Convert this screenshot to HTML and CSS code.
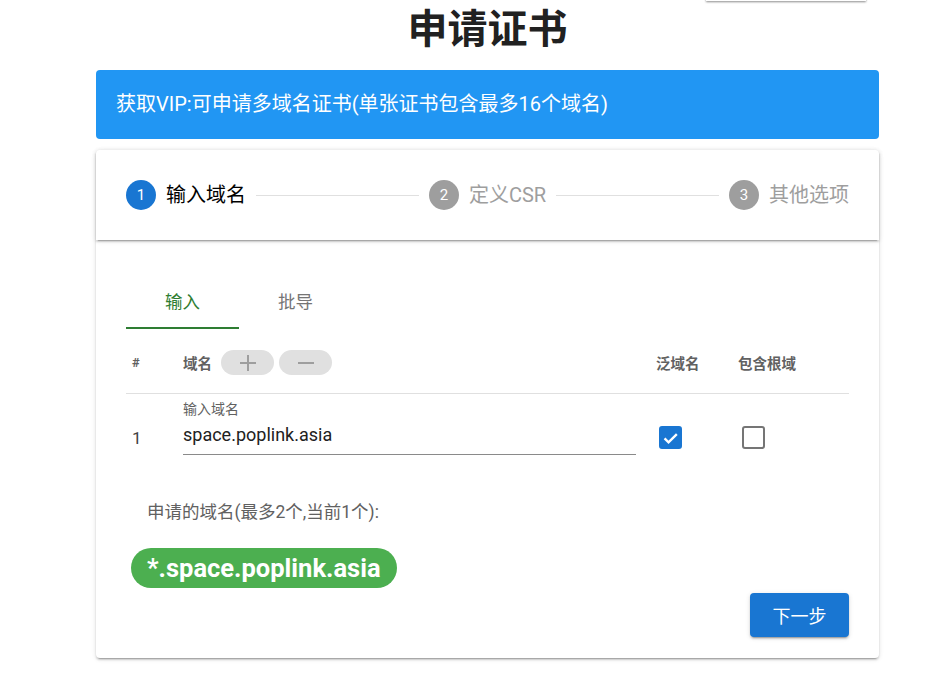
FILE: index.html
```html
<!DOCTYPE html>
<html lang="zh-CN">
<head>
<meta charset="utf-8">
<title>申请证书</title>
<link rel="stylesheet" href="styles.css">
</head>
<body>
<div class="menu-shadow"></div>
<main class="page">
  <h1 class="title">申请证书</h1>
  <div class="banner">获取VIP:可申请多域名证书(单张证书包含最多16个域名)</div>
  <section class="card">
    <div class="stepper">
      <div class="step active"><span class="step-num">1</span><span class="step-label">输入域名</span></div>
      <div class="step-line"></div>
      <div class="step"><span class="step-num">2</span><span class="step-label">定义CSR</span></div>
      <div class="step-line"></div>
      <div class="step"><span class="step-num">3</span><span class="step-label">其他选项</span></div>
    </div>
    <div class="content">
      <div class="tabs">
        <div class="tab tab-active">输入</div>
        <div class="tab">批导</div>
      </div>
      <div class="grid header">
        <div class="cell c-num">#</div>
        <div class="cell c-domain">域名
          <span class="pill"><svg width="18" height="18" viewBox="0 0 18 18"><path d="M9 1v16M1 9h16" stroke="#9e9e9e" stroke-width="2"/></svg></span>
          <span class="pill"><svg width="18" height="18" viewBox="0 0 18 18"><path d="M1 9h16" stroke="#9e9e9e" stroke-width="2"/></svg></span>
        </div>
        <div class="cell c-chk">泛域名</div>
        <div class="cell c-chk">包含根域</div>
      </div>
      <div class="grid row">
        <div class="num">1</div>
        <div class="field">
          <div class="field-label">输入域名</div>
          <div class="field-value">space.poplink.asia</div>
        </div>
        <div class="chk-cell wild"><span class="box checked"><svg width="22" height="22" viewBox="0 0 24 24"><path d="M4.5 12.5l5 5L20 7" fill="none" stroke="#fff" stroke-width="3"/></svg></span></div>
        <div class="chk-cell root"><span class="box"></span></div>
      </div>
      <p class="summary">申请的域名(最多2个,当前1个):</p>
      <div class="chips"><span class="chip">*.space.poplink.asia</span></div>
      <div class="actions"><button class="btn">下一步</button></div>
    </div>
  </section>
</main>
</body>
</html>
```

FILE: styles.css
```css
* { box-sizing: border-box; }
html, body { margin: 0; padding: 0; background: #fff; }
body {
  font-family: Roboto, "Noto Sans CJK SC", sans-serif;
  color: rgba(0,0,0,.87);
  position: relative;
  overflow: hidden;
  height: 692px;
}
.menu-shadow {
  position: absolute;
  left: 706px;
  top: -20px;
  width: 160px;
  height: 21px;
  background: #fff;
  box-shadow: 0 1px 2px rgba(0,0,0,.45);
}
.page {
  width: 783px;
  margin-left: 96px;
}
.title {
  margin: 0;
  height: 60px;
  line-height: 60px;
  font-size: 40px;
  font-weight: 700;
  text-align: center;
  color: #212121;
}
.banner {
  margin-top: 10px;
  height: 69px;
  line-height: 69px;
  padding: 0 20px;
  background: #2196f3;
  color: #fff;
  font-size: 20px;
  border-radius: 4px;
}
.card {
  margin-top: 11px;
  height: 508px;
  background: #fff;
  border-radius: 4px;
  box-shadow: 0 3px 1px -2px rgba(0,0,0,.2), 0 2px 2px 0 rgba(0,0,0,.14), 0 1px 5px 0 rgba(0,0,0,.12);
}
.stepper {
  height: 90px;
  display: flex;
  align-items: center;
  padding: 0 30px;
  box-shadow: 0 3px 1px -2px rgba(0,0,0,.2), 0 2px 2px 0 rgba(0,0,0,.14), 0 1px 5px 0 rgba(0,0,0,.12);
  position: relative;
  border-radius: 4px 4px 0 0;
}
.step {
  display: flex;
  align-items: center;
  gap: 10px;
  color: #9e9e9e;
}
.step-num {
  width: 30px;
  height: 30px;
  border-radius: 50%;
  background: #9e9e9e;
  color: #fff;
  font-size: 15px;
  display: flex;
  align-items: center;
  justify-content: center;
}
.step.active .step-num { background: #1976d2; }
.step.active { color: #000; }
.step-label { font-size: 20px; line-height: 24px; }
.step-line {
  flex: 1;
  height: 1px;
  background: #e0e0e0;
  margin: 0 10px;
}
.content {
  padding: 37px 30px 0 30px;
}
.tabs {
  display: flex;
  height: 52px;
}
.tab {
  width: 113px;
  text-align: center;
  font-size: 17.5px;
  line-height: 50px;
  color: #757575;
}
.tab-active {
  color: #2e7d32;
  border-bottom: 2px solid #2e7d32;
}
.grid {
  display: grid;
  grid-template-columns: 57px 463px 82px 1fr;
}
.header {
  height: 65px;
  padding-top: 3px;
  align-items: center;
  border-bottom: 1px solid #e0e0e0;
  font-size: 14.5px;
  font-weight: 700;
  color: #616161;
}
.cell { display: flex; align-items: center; }
.c-num { padding-left: 6px; font-size: 13px; }
.c-domain { gap: 5px; }
.c-domain .pill:first-of-type { margin-left: 4px; }
.c-chk { padding-left: 10px; }
.pill {
  width: 53px;
  height: 25px;
  border-radius: 13px;
  background: #e0e0e0;
  display: inline-flex;
  align-items: center;
  justify-content: center;
}
.row { height: 62px; }
.num {
  padding-left: 6px;
  padding-top: 32px;
  font-size: 17px;
  line-height: 24px;
  color: #424242;
}
.field {
  width: 453px;
  margin-top: 7px;
  height: 54px;
  border-bottom: 1px solid #8a8a8a;
}
.field-label {
  font-size: 14px;
  line-height: 16px;
  color: #616161;
}
.field-value {
  margin-top: 6px;
  font-size: 18px;
  line-height: 24px;
  color: #212121;
}
.chk-cell { padding-top: 32px; }
.wild { padding-left: 13px; }
.root { padding-left: 14px; }
.box {
  width: 23px;
  height: 23px;
  border-radius: 3px;
  border: 2px solid #757575;
  display: flex;
  align-items: center;
  justify-content: center;
}
.box.checked {
  background: #1976d2;
  border-color: #1976d2;
}
.summary {
  margin: 46px 0 0 21px;
  font-size: 17.5px;
  line-height: 20px;
  color: #616161;
}
.chips { margin-top: 26px; padding-left: 5px; display: flex; }
.chip {
  height: 40px;
  line-height: 40px;
  padding: 0 16px;
  border-radius: 20px;
  background: #4caf50;
  color: #fff;
  font-size: 25.5px;
  font-weight: 700;
}
.actions {
  margin-top: 5px;
  display: flex;
  justify-content: flex-end;
}
.btn {
  width: 99px;
  height: 44px;
  border: 0;
  border-radius: 4px;
  background: #1976d2;
  color: #fff;
  font-family: Roboto, "Noto Sans CJK SC", sans-serif;
  font-size: 18px;
  box-shadow: 0 3px 1px -2px rgba(0,0,0,.2), 0 2px 2px 0 rgba(0,0,0,.14), 0 1px 5px 0 rgba(0,0,0,.12);
}
```
